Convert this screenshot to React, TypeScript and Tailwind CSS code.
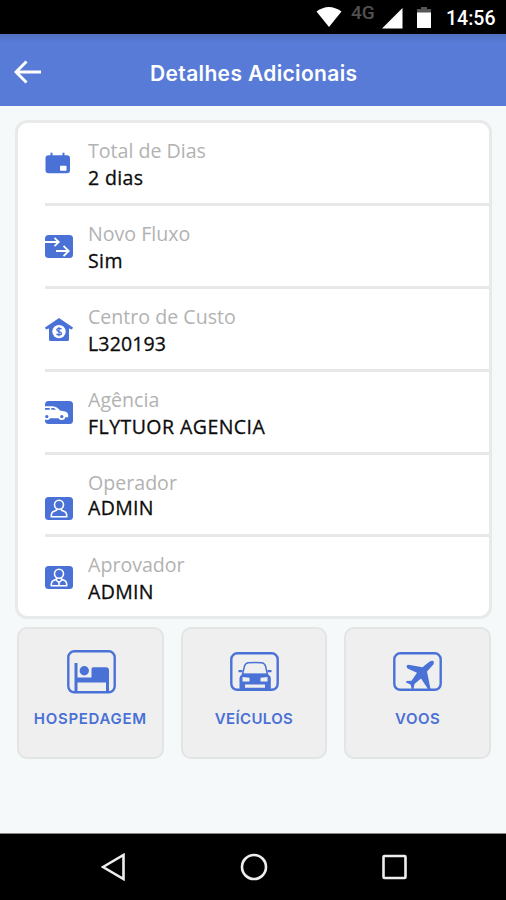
import type { ReactNode } from 'react';

const BLUE = '#4a72d6';

function CalendarIcon() {
  return (
    <svg width="28" height="23" viewBox="0 0 28 23">
      <rect x="0.5" y="3.2" width="24.5" height="18" rx="3" fill={BLUE} />
      <path d="M6.5 .7v4M18.5 .7v4" stroke={BLUE} strokeWidth="2" />
      <rect x="15" y="13.7" width="6.5" height="5" rx="0.8" fill="#fff" />
    </svg>
  );
}

function FlowIcon() {
  return (
    <svg width="28" height="23" viewBox="0 0 28 23">
      <rect width="28" height="23" rx="3.5" fill={BLUE} />
      <path d="M0 7h13M9.5 2.8 13.8 7l-4.3 4.2M11 16h12M18.5 10.8 23.7 16l-5.2 5.2" fill="none" stroke="#fff" strokeWidth="1.8" />
    </svg>
  );
}

function HouseIcon() {
  return (
    <svg width="28" height="23" viewBox="0 0 28 23">
      <path d="M14 0 28 9.6 27 11.4 24 10.6V21.5Q24 23 22.5 23H5.5Q4 23 4 21.5V10.6L1 11.4 0 9.6Z" fill={BLUE} />
      <circle cx="14" cy="13.6" r="6.7" fill="#fff" />
      <path d="M16.5 11.2C16 10 11.8 9.8 11.8 12c0 2 4.7 1.2 4.7 3.3 0 2.1-4.4 2-5 .4M14 9v9.2" fill="none" stroke={BLUE} strokeWidth="1.3" />
    </svg>
  );
}

function AgencyIcon() {
  return (
    <svg width="28" height="23" viewBox="0 0 28 23">
      <rect width="28" height="23" rx="3.5" fill={BLUE} />
      <path d="M0 5.2h8Q12 5.6 15 9.6l5 .9q3 .8 3.2 3.8v2H20a3.2 3.2 0 0 0-6.2 1H5.200L0 16Z" fill="#fff" />
      <path d="M0 7h4.800v1.800H0ZM6.300 7h2.700l2 1.800H6.300Z" fill={BLUE} />
      <circle cx="1.800" cy="15.600" r="2.600" fill={BLUE} stroke="#fff" strokeWidth="1.800" />
      <circle cx="16.800" cy="15.600" r="2.600" fill={BLUE} stroke="#fff" strokeWidth="1.800" />
    </svg>
  );
}

function PersonIcon({ tie = false }: { tie?: boolean }) {
  return (
    <svg width="28" height="23" viewBox="0 0 28 23">
      <rect width="28" height="23" rx="3.5" fill={BLUE} />
      <g fill="none" stroke="#fff" strokeWidth="1.6" strokeLinejoin="round">
        <circle cx="14" cy="7.7" r="4.5" />
        <path d="M11.5 11.8v1.500l-3 1.200q-2.300 1-2.300 5.200h15.600q0-4.200-2.300-5.200l-3-1.200v-1.500" />
        {tie && <path d="m11 14 3 2.500 3-2.500M14 16.500v3" />}
      </g>
    </svg>
  );
}

function BedIcon() {
  return (
    <svg width="50" height="44" viewBox="0 0 50 44">
      <rect x="1.3" y="1.3" width="46.4" height="41" rx="6" fill="none" stroke={BLUE} strokeWidth="2.4" />
      <path d="M7.500 13h3v14.500h14V19q0-1.800 1.800-1.800H39q3 0 3 3V41h-3v-8.500H10.500V41h-3Z" fill={BLUE} />
      <circle cx="17.300" cy="20.800" r="4.700" fill={BLUE} />
    </svg>
  );
}

function CarIcon() {
  return (
    <svg width="50" height="40" viewBox="0 0 50 40">
      <rect x="1.3" y="1.3" width="46.4" height="36.5" rx="6" fill="none" stroke={BLUE} strokeWidth="2.4" />
      <path d="M12.500 22.500 14.500 14q1-3 4-3.300 6.500-.6 13 0 3 .3 4 3.300L37.500 22.500Z" fill="none" stroke={BLUE} strokeWidth="1.500" />
      <path d="M8.500 18h4v2.200h-4ZM37.500 18h4v2.200h-4ZM13 21.500h24l3 2.500q.8 1 .8 2.500V37H9.500V26.500Q9.500 25 10.300 24Z" fill={BLUE} />
      <path d="M12.500 25l7 .8v3.700h-7ZM37.500 25l-7 .8v3.700h7ZM15 32.500h20v3.200H15Z" fill="#efefef" />
    </svg>
  );
}

function PlaneIcon() {
  return (
    <svg width="50" height="40" viewBox="0 0 50 40">
      <rect x="1.3" y="1.3" width="46.4" height="36.5" rx="6" fill="none" stroke={BLUE} strokeWidth="2.4" />
      <path d="M13.500 14.500Q13.500 13 15.500 12.800L29.500 15.200 36 10Q39.500 8 40.800 9.500 41.500 11.500 39 14L34 19.500 37.500 37H35L28 26.500 21.500 32 20.500 37H18.800L17.500 32.500 13 30.500 13.500 29 18.500 28.800 24 20.800 14.500 16.500Z" fill={BLUE} />
    </svg>
  );
}

interface RowProps {
  label: string;
  value: string;
  icon: ReactNode;
  iconPad?: string;
  valueGap?: string;
  valueTracking: string;
}

const rows: RowProps[] = [
  { label: 'Total de Dias', value: '2 dias', icon: <CalendarIcon />, valueTracking: 'tracking-[0.35px]' },
  { label: 'Novo Fluxo', value: 'Sim', icon: <FlowIcon />, valueTracking: 'tracking-[0.4px]' },
  { label: 'Centro de Custo', value: 'L320193', icon: <HouseIcon />, valueTracking: 'tracking-[0.15px]' },
  { label: 'Agência', value: 'FLYTUOR AGENCIA', icon: <AgencyIcon />, valueTracking: 'tracking-[0.45px]' },
  { label: 'Operador', value: 'ADMIN', icon: <PersonIcon />, iconPad: 'pt-[42px]', valueGap: '-mt-[2px]', valueTracking: 'tracking-[0.35px]' },
  { label: 'Aprovador', value: 'ADMIN', icon: <PersonIcon tie />, valueTracking: 'tracking-[0.35px]' },
];

function Row({ label, value, icon, iconPad = 'pt-[29px]', valueGap = '', valueTracking }: RowProps) {
  return (
    <div className="ml-[27px] flex h-[82.9px] border-b-[3px] border-[#e8e8e8] font-['Open_Sans',sans-serif] last:border-b-0">
      <div className={`w-[43px] shrink-0 ${iconPad}`}>{icon}</div>
      <div className="whitespace-nowrap pt-[14px]">
        <div className="text-[19.6px] leading-[27px] font-normal text-[#b2b2b2]">{label}</div>
        <div className={`text-[19.5px] leading-[27px] font-medium text-[#0c0c0c] [-webkit-text-stroke:0.3px_#0c0c0c] ${valueGap} ${valueTracking}`}>{value}</div>
      </div>
    </div>
  );
}

function Tile({ label, icon, tracking }: { label: string; icon: ReactNode; tracking: string }) {
  return (
    <button className="flex h-[132px] flex-col items-center rounded-[10px] border-2 border-[#e3e5e5] bg-[#efefef]">
      <span className="flex h-[46px] translate-y-[20px] items-center">{icon}</span>
      <span className={`mt-[34px] whitespace-nowrap font-['Inter',sans-serif] text-[15px] leading-[20px] font-semibold text-[#4a70d5] ${tracking}`}>{label}</span>
    </button>
  );
}

export default function App() {
  return (
    <div className="flex h-[900px] w-[506px] flex-col overflow-hidden bg-[#f5f9fa]">
      <div className="flex h-[34px] shrink-0 items-center bg-black pl-[316px]">
        <svg width="26" height="34" viewBox="0 0 26 34"><path d="M.5 11.5Q12.800 2.500 25.500 11.500L13 27Z" fill="#fff" /></svg>
        <span className="-mt-[8px] ml-[9px] w-[25px] font-['Roboto',sans-serif] text-[19px] leading-[20px] font-medium text-[#505050]">4G</span>
        <svg className="ml-[6px]" width="21" height="34" viewBox="0 0 21 34"><path d="M0 28.500 20.500 8v20.500Z" fill="#fff" /></svg>
        <svg className="ml-[14px]" width="14" height="34" viewBox="0 0 14 34">
          <path d="M0 9h4V7h6v2h4v4H0Z" fill="#555" /><path d="M0 12.500h14V28H0Z" fill="#fff" />
        </svg>
        <span className="mt-[3px] ml-[15px] whitespace-nowrap font-['Roboto',sans-serif] text-[19.5px] leading-[24px] font-medium text-white">14:56</span>
      </div>
      <header className="flex h-[72px] shrink-0 items-center bg-[#587bd8] bg-linear-to-b from-[#5070bf] via-[#587bd8] via-12% to-[#587bd8]">
        <svg className="mt-[3px] ml-[14px]" width="28" height="26" viewBox="0 0 28 26">
          <path d="M12.500 2.500 2 13l10.500 10.500M2 13h25" fill="none" stroke="#fff" strokeWidth="3" />
        </svg>
        <h1 className="mt-[7px] ml-[108px] whitespace-nowrap font-['Inter',sans-serif] text-[21px] leading-[28px] font-semibold tracking-[0.35px] text-white">Detalhes Adicionais</h1>
      </header>
      <main className="flex flex-1 flex-col">
        <section className="mt-[14px] ml-[15px] h-[499px] w-[477px] rounded-[12px] border-[3px] border-[#e8eaea] bg-white">
          {rows.map((r) => <Row key={r.label} {...r} />)}
        </section>
        <div className="mt-[8px] ml-[17px] grid w-[474px] grid-cols-3 gap-[17px]">
          <Tile label="HOSPEDAGEM" icon={<span className="ml-[3px]"><BedIcon /></span>} tracking="tracking-[0.7px]" />
          <Tile label="VEÍCULOS" icon={<span className="ml-[2px]"><CarIcon /></span>} tracking="tracking-[0.35px]" />
          <Tile label="VOOS" icon={<PlaneIcon />} tracking="tracking-[0.5px]" />
        </div>
      </main>
      <nav className="flex h-[67px] shrink-0 items-center border-t border-[#888] bg-black pl-[101px]">
        <svg width="25" height="28" viewBox="0 0 25 28"><path d="M2 14 22.500 2v24Z" fill="none" stroke="#eee" strokeWidth="2.600" /></svg>
        <svg className="ml-[114px]" width="28" height="28" viewBox="0 0 28 28"><circle cx="14" cy="14" r="12" fill="none" stroke="#eee" strokeWidth="2.600" /></svg>
        <svg className="ml-[114px]" width="26" height="28" viewBox="0 0 26 28"><rect x="1.500" y="3" width="22" height="22" rx="1" fill="none" stroke="#eee" strokeWidth="2.600" /></svg>
      </nav>
    </div>
  );
}
